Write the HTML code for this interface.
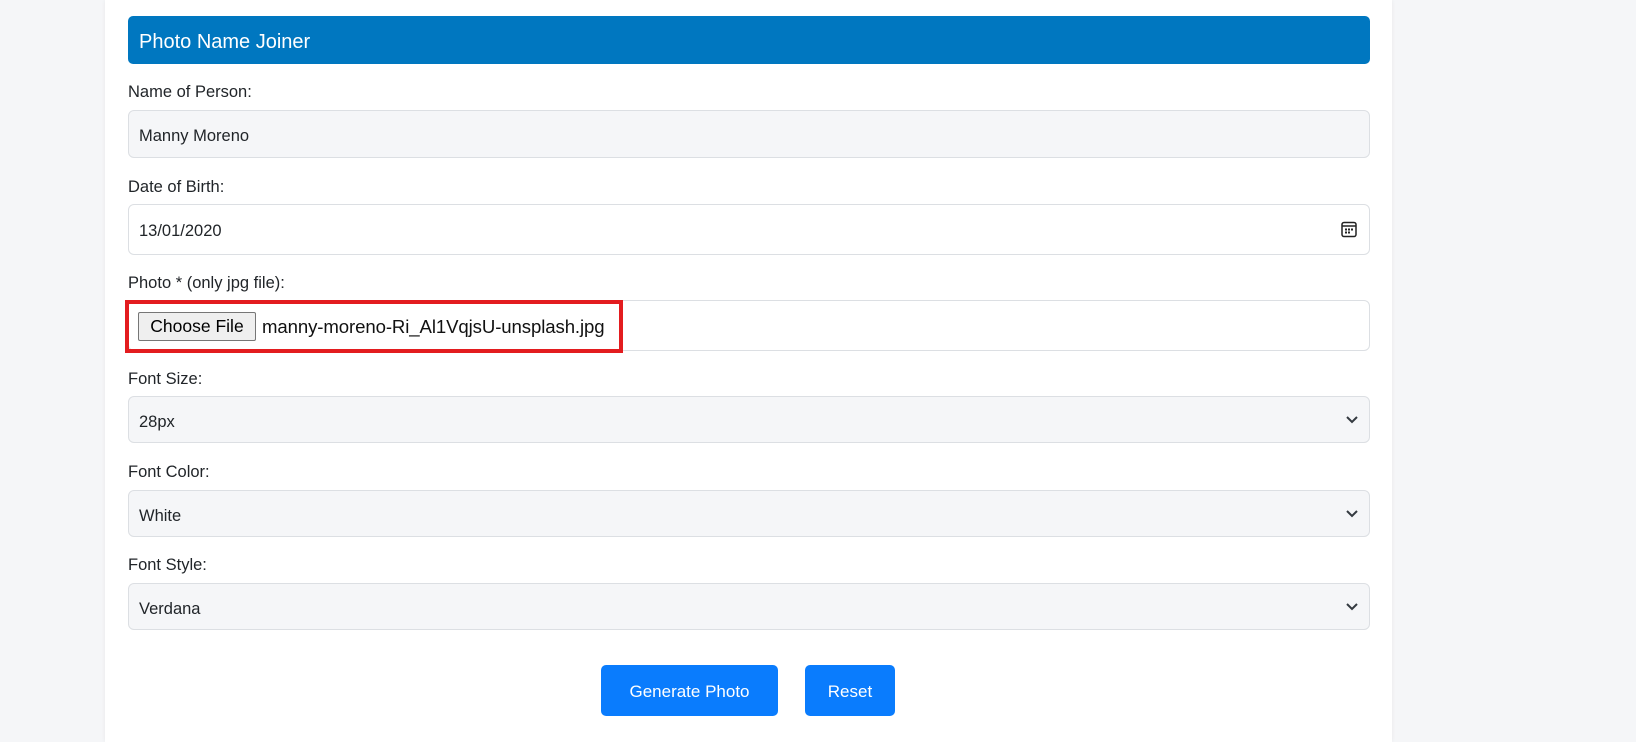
<!DOCTYPE html>
<html><head><meta charset="utf-8"><style>
html,body{margin:0;padding:0}
body{width:1636px;height:742px;background:#f5f6f8;font-family:"Liberation Sans",sans-serif;color:#212529;position:relative;overflow:hidden}
.card{position:absolute;left:105px;top:0;width:1287px;height:742px;background:#fff;box-shadow:0 0 4px rgba(0,0,0,.06)}
.hdr{position:absolute;left:128px;top:16px;width:1242px;height:48px;background:#0077c0;border-radius:5px;color:#fff;font-size:20px;line-height:52px;box-sizing:border-box;padding-left:11px}
.lbl{position:absolute;left:128px;font-size:16.5px;line-height:20px}
.inp{position:absolute;left:128px;width:1242px;box-sizing:border-box;border:1px solid #dcdfe3;border-radius:6px;font-size:16.5px;padding-left:10px}
.gray{background:#f5f6f8}
.wh{background:#fff}
.chev{position:absolute;right:10px;top:50%;margin-top:-5px}
.btn{position:absolute;top:665px;height:51px;background:#0a7cfd;color:#fff;border-radius:5px;font-size:17px;line-height:53px;text-align:center}
</style></head><body>
<div class="card"></div>
<div class="hdr">Photo Name Joiner</div>

<div class="lbl" style="top:82px">Name of Person:</div>
<div class="inp gray" style="top:110px;height:48px;line-height:50px">Manny Moreno</div>

<div class="lbl" style="top:177px">Date of Birth:</div>
<div class="inp wh" style="top:204px;height:51px;line-height:53px">13/01/2020
<svg style="position:absolute;right:12px;top:16px" width="16" height="17" viewBox="0 0 16 17"><rect x="1" y="1.5" width="14" height="14" rx="2" fill="none" stroke="#222" stroke-width="1.5"/><line x1="1" y1="5" x2="15" y2="5" stroke="#222" stroke-width="1.5"/><g fill="#222"><rect x="4" y="7.5" width="2" height="2"/><rect x="7" y="7.5" width="2" height="2"/><rect x="10" y="7.5" width="2" height="2"/><rect x="4" y="10.5" width="2" height="2"/><rect x="7" y="10.5" width="2" height="2"/></g></svg></div>

<div class="lbl" style="top:273px">Photo * (only jpg file):</div>
<div class="inp wh" style="top:300px;height:51px"></div>
<div style="position:absolute;left:125px;top:300px;width:498px;height:53px;box-sizing:border-box;border:4px solid #e31c1f"></div>
<div style="position:absolute;left:138px;top:312px;width:118px;height:29px;box-sizing:border-box;border:1px solid #767676;background:#efefef;border-radius:2px;font-size:17.5px;line-height:27px;text-align:center;color:#000">Choose File</div>
<div style="position:absolute;left:262px;top:312px;font-size:18.6px;line-height:30px;color:#111;letter-spacing:-0.1px">manny-moreno-Ri_Al1VqjsU-unsplash.jpg</div>

<div class="lbl" style="top:369px">Font Size:</div>
<div class="inp gray" style="top:396px;height:47px;line-height:51px">28px<svg class="chev" width="14" height="10" viewBox="0 0 14 10"><path d="M2 2l5 5 5-5" fill="none" stroke="#343a40" stroke-width="2"/></svg></div>

<div class="lbl" style="top:462px">Font Color:</div>
<div class="inp gray" style="top:490px;height:47px;line-height:51px">White<svg class="chev" width="14" height="10" viewBox="0 0 14 10"><path d="M2 2l5 5 5-5" fill="none" stroke="#343a40" stroke-width="2"/></svg></div>

<div class="lbl" style="top:555px">Font Style:</div>
<div class="inp gray" style="top:583px;height:47px;line-height:51px">Verdana<svg class="chev" width="14" height="10" viewBox="0 0 14 10"><path d="M2 2l5 5 5-5" fill="none" stroke="#343a40" stroke-width="2"/></svg></div>

<div class="btn" style="left:601px;width:177px">Generate Photo</div>
<div class="btn" style="left:805px;width:90px">Reset</div>
</body></html>
